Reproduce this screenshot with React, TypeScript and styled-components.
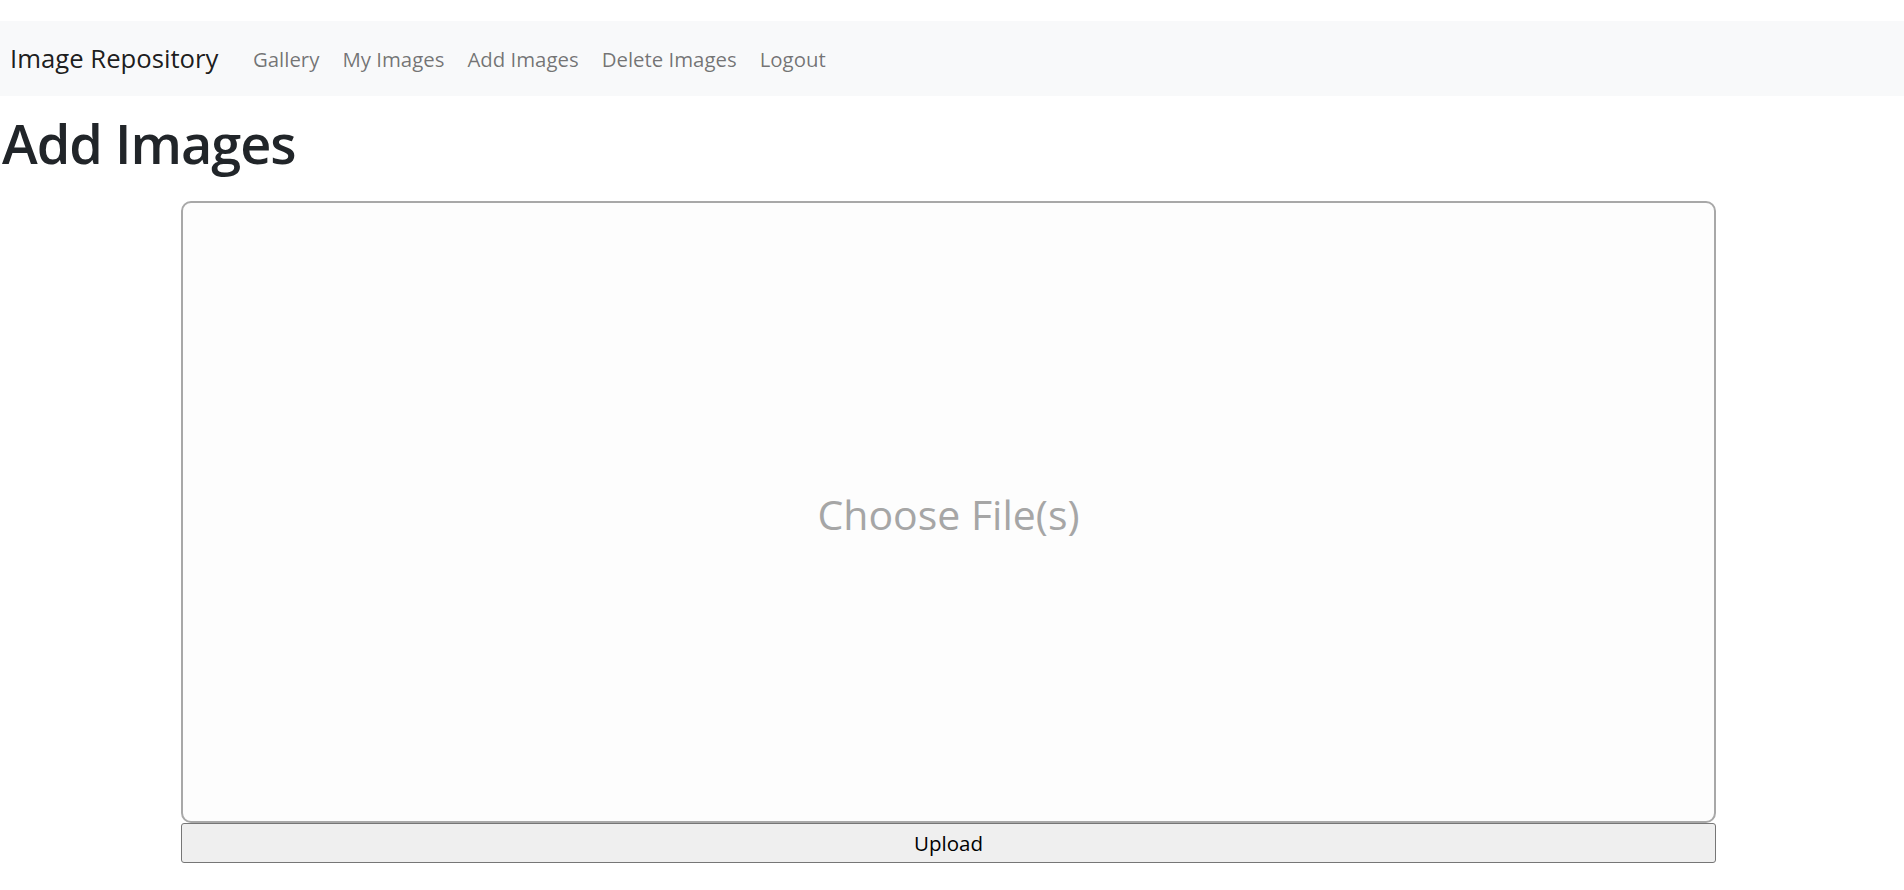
import React from "react";
import styled, { createGlobalStyle } from "styled-components";

const GlobalStyle = createGlobalStyle`
  html, body { margin: 0; padding: 0; background: #ffffff; }
  body {
    font-family: "Open Sans", "Noto Sans", sans-serif;
    color: #212529;
  }
  * { box-sizing: border-box; }
`;

const Page = styled.div`
  padding-top: 21px;
`;

const Navbar = styled.nav`
  display: flex;
  align-items: center;
  height: 75px;
  padding: 0 10px;
  background: #f8f9fa;
`;

const Brand = styled.a`
  font-size: 25.7px;
  line-height: 37px;
  color: rgba(0, 0, 0, 0.9);
  text-decoration: none;
  margin-right: 23px;
`;

const NavList = styled.div`
  display: flex;
  align-items: center;
`;

const NavLink = styled.a`
  font-size: 20.4px;
  line-height: 30px;
  padding: 0 11.5px;
  color: rgba(0, 0, 0, 0.55);
  text-decoration: none;
  cursor: pointer;
`;

const Title = styled.h1`
  margin: 17px 0 0 2px;
  font-size: 54px;
  line-height: 60px;
  font-weight: 600;
  letter-spacing: -1px;
  color: #212529;
`;

const Uploader = styled.div`
  display: flex;
  flex-direction: column;
  width: 1535px;
  margin: 28px 0 0 181px;
`;

const DropZone = styled.label`
  display: flex;
  align-items: center;
  justify-content: center;
  height: 622px;
  background: #fdfdfd;
  border: 2px solid #a8a8a8;
  border-radius: 10px;
  cursor: pointer;
`;

const DropText = styled.span`
  font-size: 41px;
  color: #a6a6a6;
  margin-top: 4px;
`;

const UploadButton = styled.button`
  height: 40px;
  background: #efefef;
  border: 1px solid #767676;
  border-radius: 3px;
  font-family: "Open Sans", "Noto Sans", sans-serif;
  font-size: 20.5px;
  color: #000000;
  cursor: pointer;
`;

export default function App() {
  return (
    <Page>
      <GlobalStyle />
      <Navbar>
        <Brand>Image Repository</Brand>
        <NavList>
          <NavLink>Gallery</NavLink>
          <NavLink>My Images</NavLink>
          <NavLink>Add Images</NavLink>
          <NavLink>Delete Images</NavLink>
          <NavLink>Logout</NavLink>
        </NavList>
      </Navbar>
      <Title>Add Images</Title>
      <Uploader>
        <DropZone>
          <DropText>Choose File(s)</DropText>
        </DropZone>
        <UploadButton>Upload</UploadButton>
      </Uploader>
    </Page>
  );
}
